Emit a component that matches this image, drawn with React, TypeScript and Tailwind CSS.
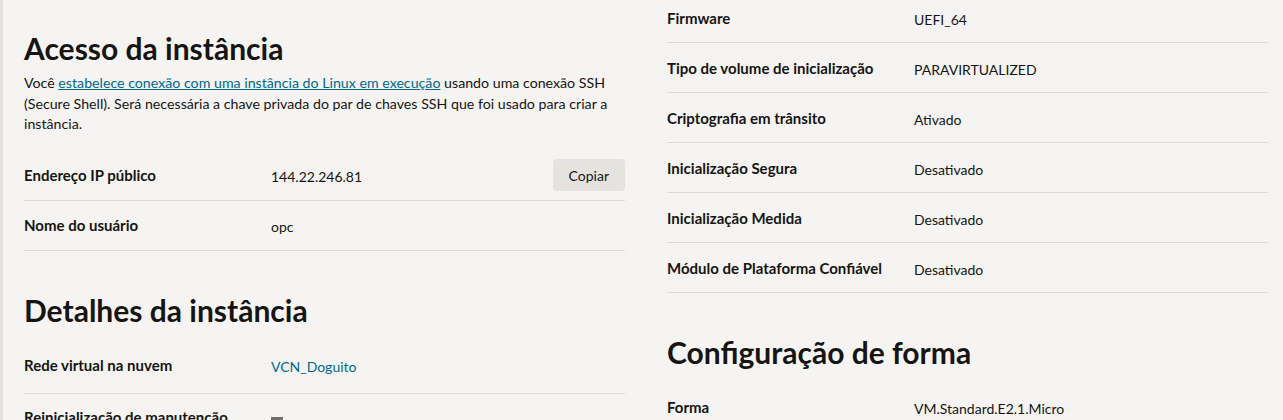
const font = { fontFamily: 'Lato, "Noto Sans", sans-serif' };

type Row = { label: string; value: React.ReactNode; action?: React.ReactNode };

function DetailRow({ label, value, action }: Row) {
  return (
    <div className="flex items-center h-[50px] border-b border-[#dedcd9]">
      <div className="w-[247px] shrink-0 mt-[1px] text-[15px] font-bold text-[#161513]">{label}</div>
      <div className="flex-1 mt-[3px] text-[14px] text-[#161513]">{value}</div>
      {action}
    </div>
  );
}

function Link({ children }: { children: React.ReactNode }) {
  return <span className="text-[#00688c]">{children}</span>;
}

export default function App() {
  const access: Row[] = [
    {
      label: "Endereço IP público",
      value: "144.22.246.81",
      action: (
        <button className="h-[32px] px-[16px] rounded-[4px] bg-[#e4e3e0] text-[14px] text-[#161513]">
          Copiar
        </button>
      ),
    },
    { label: "Nome do usuário", value: "opc" },
  ];

  const security: Row[] = [
    { label: "Firmware", value: "UEFI_64" },
    { label: "Tipo de volume de inicialização", value: "PARAVIRTUALIZED" },
    { label: "Criptografia em trânsito", value: "Ativado" },
    { label: "Inicialização Segura", value: "Desativado" },
    { label: "Inicialização Medida", value: "Desativado" },
    { label: "Módulo de Plataforma Confiável", value: "Desativado" },
  ];

  return (
    <div style={font} className="w-[1283px] h-[420px] overflow-hidden bg-[#f5f4f2] border-l-[3px] border-[#e3e2df]">
      <div className="grid grid-cols-[601px_601px] gap-x-[42px] pl-[21px]">
        {/* left column */}
        <div>
          <h2 className="mt-[30px] text-[30px] leading-[36px] font-bold text-[#161513]">Acesso da instância</h2>
          <p className="mt-[7px] text-[14.2px] leading-[20.5px] text-[#161513]">
            Você <span className="text-[#00688c] underline">estabelece conexão com uma instância do Linux em execução</span>{" "}
            usando uma conexão SSH (Secure Shell). Será necessária a chave privada do par de chaves SSH que foi usado para criar a
            instância.
          </p>
          <div className="mt-[16px]">
            {access.map((r) => (
              <DetailRow key={r.label} {...r} />
            ))}
          </div>
          <h2 className="mt-[41px] text-[30px] leading-[36px] font-bold text-[#161513]">Detalhes da instância</h2>
          <div className="mt-[16px]">
            <div className="flex items-center h-[50px] pb-[6px] border-b border-[#dedcd9]">
              <div className="w-[247px] shrink-0 text-[15px] font-bold text-[#161513]">Rede virtual na nuvem</div>
              <div className="flex-1 mt-[3px] text-[14px]">
                <Link>VCN_Doguito</Link>
              </div>
            </div>
            <div className="flex items-start pt-[12px]">
              <div className="w-[247px] shrink-0 text-[15px] font-bold text-[#161513]">Reinicialização de manutenção</div>
              <div className="flex-1 pt-[11px]">
                <div className="w-[12px] h-[10px] bg-[#6f6e6c]" />
              </div>
            </div>
          </div>
        </div>

        {/* right column */}
        <div className="-mt-[7px]">
          {security.map((r) => (
            <DetailRow key={r.label} {...r} />
          ))}
          <h2 className="mt-[41px] text-[30px] leading-[36px] font-bold text-[#161513]">Configuração de forma</h2>
          <div className="mt-[12px]">
            <DetailRow label="Forma" value="VM.Standard.E2.1.Micro" />
          </div>
        </div>
      </div>
    </div>
  );
}
